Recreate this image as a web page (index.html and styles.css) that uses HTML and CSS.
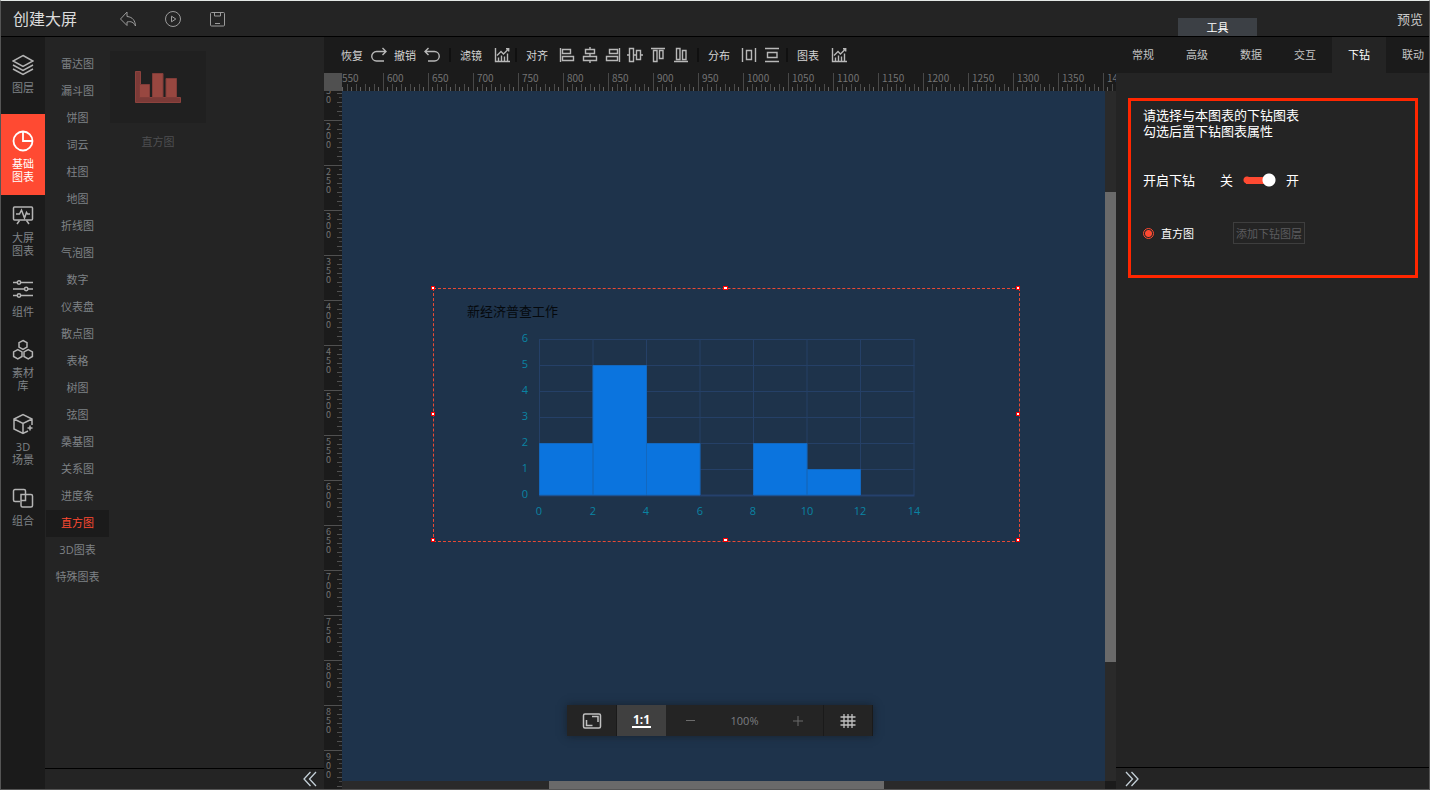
FILE: index.html
```html
<!DOCTYPE html>
<html lang="zh-CN">
<head>
<meta charset="utf-8">
<title>创建大屏</title>
<link rel="stylesheet" href="styles.css">
</head>
<body>
<svg class="defs" aria-hidden="true">
  <symbol id="i-chart" viewBox="0 0 16 16"><path d="M1.500 1v13.500H16M4.500 14v-3.500M7.500 14V8.500M10.500 14V9.500M13.500 14V6.500M3 8.500l4-4 2.500 2.500 5-5M12 1.800h2.700V4.500"/></symbol>
</svg>
<div class="app">
  <header class="top">
    <h1 class="title">创建大屏</h1>
    <div class="actions">
      <button class="act" aria-label="返回"><svg viewBox="0 0 18 18"><path d="M8 2L1.500 9 8 15.500V12c4-1 6.500 0 8.500 4-.3-5-2.500-9-8.500-9.500z"/></svg></button>
      <button class="act" aria-label="播放"><svg viewBox="0 0 18 18"><circle cx="9" cy="9" r="7.500"/><path d="M7.500 6.200v5.600L11.800 9z"/></svg></button>
      <button class="act" aria-label="保存"><svg viewBox="0 0 18 18"><rect x="1.500" y="2.500" width="14" height="13.500" rx="1"/><path d="M5.500 2.500v3.500h6V2.500M6 13.500h5"/></svg></button>
    </div>
    <button class="tool-tab">工具</button>
    <a class="preview" href="#preview">预览</a>
  </header>

  <div class="main">
    <nav class="nav">
      <button class="nav-item"><svg viewBox="0 0 22 22"><path d="M11 1.500L21 7l-10 5.500L1 7zM1 11l10 5.500L21 11M1 15l10 5.500L21 15"/></svg><span>图层</span></button>
      <button class="nav-item active"><svg viewBox="0 0 22 22"><circle cx="11" cy="11" r="9.500"/><path d="M11 1.500V11h9.500"/></svg><span>基础<br>图表</span></button>
      <button class="nav-item"><svg viewBox="0 0 22 22"><rect x="1.500" y="3" width="19" height="13" rx="1"/><path d="M4 10h3.500l2-4 3 8 2-5.500 1 1.500H18M7.500 16.500L5 20M14.500 16.500L17 20"/></svg><span>大屏<br>图表</span></button>
      <button class="nav-item"><svg viewBox="0 0 22 22"><path d="M1 4.500h4.500M8.500 4.500H21M1 11h11.500M16 11h5M1 17.500h4.500M8.500 17.500H21"/><circle cx="7" cy="4.500" r="1.700"/><circle cx="14.200" cy="11" r="1.700"/><circle cx="7" cy="17.500" r="1.700"/></svg><span>组件</span></button>
      <button class="nav-item"><svg viewBox="0 0 22 22"><path d="M11 1.500l4 2.200v4.400l-4 2.200-4-2.200V3.700zM5.800 10.600l4.200 2.300v4.600l-4.200 2.300-4.200-2.300v-4.600zM16.200 10.600l4.200 2.300v4.600l-4.200 2.300-4.200-2.300v-4.600z"/></svg><span>素材<br>库</span></button>
      <button class="nav-item"><svg viewBox="0 0 22 22"><path d="M20 12V6L11 1.500 2 6v10l9 4.500 5-2.500M2 6l9 4.500L20 6M11 10.500v10M18 12.500v5M15.500 15h5"/></svg><span>3D<br>场景</span></button>
      <button class="nav-item"><svg viewBox="0 0 22 22"><path d="M8 14.500H3a1.500 1.500 0 0 1-1.500-1.500V4A1.500 1.500 0 0 1 3 2.500h9A1.500 1.500 0 0 1 13.500 4v3M9 7.500h10a1.500 1.500 0 0 1 1.500 1.500v9.500a1.500 1.500 0 0 1-1.500 1.500h-8.500A1.500 1.500 0 0 1 9 18.500zM13.500 7.500v6H9"/></svg><span>组合</span></button>
    </nav>

    <aside class="left">
      <div class="left-body">
        <ul class="types">
          <li><button>雷达图</button></li><li><button>漏斗图</button></li><li><button>饼图</button></li><li><button>词云</button></li><li><button>柱图</button></li><li><button>地图</button></li><li><button>折线图</button></li><li><button>气泡图</button></li><li><button>数字</button></li><li><button>仪表盘</button></li><li><button>散点图</button></li><li><button>表格</button></li><li><button>树图</button></li><li><button>弦图</button></li><li><button>桑基图</button></li><li><button>关系图</button></li><li><button>进度条</button></li><li><button class="active">直方图</button></li><li><button>3D图表</button></li><li><button>特殊图表</button></li>
        </ul>
        <figure class="thumb">
          <div class="thumb-box"><svg viewBox="0 0 46 32"><path class="frame" d="M.5.500h5v26h40v5H.5z"/><path class="bars" d="M4.500 13.500h10v13h-10zM17.500 2.500h10.500v24H17.500zM31 7.500h10.500v19H31z"/></svg></div>
          <figcaption>直方图</figcaption>
        </figure>
      </div>
      <footer class="foot foot-left"><button aria-label="收起"><svg viewBox="0 0 14 16"><path d="M7.500 1L1 8l6.500 7M13 1L6.500 8l6.500 7"/></svg></button></footer>
    </aside>

    <main class="center">
      <div class="toolbar">
        <button class="cmd">恢复<svg viewBox="0 0 16 16"><path d="M15 4.500H5.500a4.500 4.500 0 0 0 0 9.500H13M11.500 1L15 4.500 11.500 8"/></svg></button>
        <button class="cmd">撤销<svg viewBox="0 0 16 16"><path d="M1 4.500h9.500a4.500 4.500 0 0 1 0 9.500H4M4.500 1L1 4.500 4.500 8"/></svg></button>
        <i class="sep"></i>
        <button class="cmd wide">滤镜<svg><use href="#i-chart"/></svg></button>
        <i class="sep near"></i>
        <span class="name">对齐</span>
        <div class="aligns">
          <button aria-label="左对齐"><svg viewBox="0 0 16 16"><path d="M1.500 1v14M3.500 2.500h8v4h-8zM3.500 9.500h11v4h-11z"/></svg></button>
          <button aria-label="水平居中"><svg viewBox="0 0 16 16"><path d="M8 0v2.500M8 6.500v3M8 13.500V16M3.500 2.500h9v4h-9zM1.500 9.500h13v4h-13z"/></svg></button>
          <button aria-label="右对齐"><svg viewBox="0 0 16 16"><path d="M14.500 1v14M4.500 2.500h8v4h-8zM1.500 9.500h11v4h-11z"/></svg></button>
          <button aria-label="垂直居中"><svg viewBox="0 0 16 16"><path d="M0 8h2.500M6.500 8h3M13.500 8H16M2.500 1.500h4v13h-4zM9.500 3.500h4v9h-4z"/></svg></button>
          <button aria-label="顶对齐"><svg viewBox="0 0 16 16"><path d="M1 1.500h14M3.500 3.500h3.500v11H3.500zM9.500 3.500h3.500v8H9.500z"/></svg></button>
          <button aria-label="底对齐"><svg viewBox="0 0 16 16"><path d="M1 14.500h14M3.500 1.500h3.500v11H3.500zM9.500 3.500h3.500v9H9.500z"/></svg></button>
        </div>
        <i class="sep"></i>
        <span class="name">分布</span>
        <div class="spread">
          <button aria-label="水平分布"><svg viewBox="0 0 16 16"><path d="M1.500 1v14M14.500 1v14M5.500 3.500h5v9h-5z"/></svg></button>
          <button aria-label="垂直分布"><svg viewBox="0 0 16 16"><path d="M1 1.500h14M1 14.500h14M3.500 5.500h9.500v5H3.500z"/></svg></button>
        </div>
        <i class="sep near"></i>
        <button class="cmd wide">图表<svg><use href="#i-chart"/></svg></button>
      </div>
      <div class="stage">
        <div class="corner"></div>
        <div class="ruler-x"><span>550</span><span>600</span><span>650</span><span>700</span><span>750</span><span>800</span><span>850</span><span>900</span><span>950</span><span>1000</span><span>1050</span><span>1100</span><span>1150</span><span>1200</span><span>1250</span><span>1300</span><span>1350</span><span>1400</span></div>
        <div class="ruler-y"><span>150</span><span>200</span><span>250</span><span>300</span><span>350</span><span>400</span><span>450</span><span>500</span><span>550</span><span>600</span><span>650</span><span>700</span><span>750</span><span>800</span><span>850</span><span>900</span></div>
        <div class="canvas">
          <div class="selection">
            <svg class="chart" viewBox="0 0 587 254">
              <text class="chart-title" x="34" y="28">新经济普查工作</text>
              <path class="grid" d="M106 51.500h375.500M106 77.500h375.500M106 103.500h375.500M106 129.500h375.500M106 155.500h375.500M106 181.500h375.500M106.500 51v156M160 51v156M213.500 51v156M267 51v156M320.500 51v156M374 51v156M427.500 51v156M481 51v156"/>
              <path class="axis" d="M106 207.500h375.500"/>
              <g class="bar"><path d="M106.500 155.500h53.500v51.500h-53.500zM160 77.500h53.500V207H160zM213.500 155.500H267V207h-53.500zM320.500 155.500H374V207h-53.500zM374 181.500h53.500V207H374z"/></g>
              <g class="ylab"><text x="95" y="54">6</text><text x="95" y="80">5</text><text x="95" y="106">4</text><text x="95" y="132">3</text><text x="95" y="158">2</text><text x="95" y="184">1</text><text x="95" y="210">0</text></g>
              <g class="xlab"><text x="106" y="227">0</text><text x="160" y="227">2</text><text x="213" y="227">4</text><text x="267" y="227">6</text><text x="320" y="227">8</text><text x="374" y="227">10</text><text x="427" y="227">12</text><text x="481" y="227">14</text></g>
            </svg>
            <i class="h tl"></i><i class="h tm"></i><i class="h tr"></i><i class="h ml"></i><i class="h mr"></i><i class="h bl"></i><i class="h bm"></i><i class="h br"></i>
          </div>
        </div>
        <div class="scroll-y"><i></i></div>
        <div class="scroll-x"><i></i></div>
        <div class="scroll-corner"></div>
      </div>
      <div class="zoombar">
        <button aria-label="适应"><svg viewBox="0 0 20 18"><rect x="1.500" y="2" width="17" height="14" rx="1.500"/><path d="M10 4.500h6v5.500M4.500 8v5.500h6"/></svg></button>
        <button class="active"><span class="ratio">1:1</span></button>
        <div class="zoom">
          <button aria-label="缩小"><svg viewBox="0 0 10 10"><path d="M0 4.500h9"/></svg></button>
          <output>100%</output>
          <button aria-label="放大"><svg viewBox="0 0 10 10"><path d="M0 5h10M5 0v10"/></svg></button>
        </div>
        <button class="gridbtn" aria-label="网格"><svg viewBox="0 0 16 16"><path d="M4 1v14M8 1v14M12 1v14M.5 4h15M.5 8h15M.5 12h15"/></svg></button>
      </div>
    </main>

    <aside class="right">
      <div class="tabs"><button>常规</button><button>高级</button><button>数据</button><button>交互</button><button class="active">下钻</button><button>联动</button></div>
      <div class="right-body">
        <section class="drill">
          <p>请选择与本图表的下钻图表<br>勾选后置下钻图表属性</p>
          <label class="enable"><span class="enable-name">开启下钻</span><span>关</span><input type="checkbox" class="switch" checked><span>开</span></label>
          <div class="target">
            <label><input type="radio" name="layer" checked>直方图</label>
            <button>添加下钻图层</button>
          </div>
        </section>
      </div>
      <footer class="foot"><button aria-label="展开"><svg viewBox="0 0 14 16"><path d="M1 1l6.500 7L1 15M6.500 1L13 8l-6.500 7"/></svg></button></footer>
    </aside>
  </div>
</div>
</body>
</html>
```
FILE: styles.css
```css
* { box-sizing: border-box; }
body {
  margin: 0;
  font: 11px/13px "Open Sans", "Noto Sans CJK SC", sans-serif;
  color: #7f8286;
  background: #242424;
}
button {
  font: inherit;
  color: inherit;
  background: none;
  border: 0;
  padding: 0;
  margin: 0;
}
svg { fill: none; stroke: currentColor; display: block; flex: none; }
.defs { position: absolute; width: 0; height: 0; }
h1, p, ul, figure { margin: 0; padding: 0; }
ul { list-style: none; }

.app {
  height: 100vh;
  display: flex;
  flex-direction: column;
  border: 1px solid #555;
  border-top-color: #e4e8e6;
  overflow: hidden;
}

/* header */
.top {
  flex: none;
  height: 36px;
  display: flex;
  align-items: center;
  border-bottom: 1px solid #000;
  padding: 0 6px 0 12px;
  color: #c8c8c8;
}
.title { font-size: 16px; line-height: 24px; font-weight: 400; color: #dcdcdc; }
.actions { display: flex; gap: 27px; margin-left: 42px; color: #9b9b9b; }
.act svg { width: 18px; height: 18px; }
.tool-tab {
  align-self: flex-end;
  width: 79px;
  height: 18px;
  margin-left: auto;
  background: #3c4045;
  color: #fff;
}
.preview {
  width: 26px;
  margin-left: 140px;
  font-size: 13px;
  line-height: 20px;
  color: #c8c8c8;
  text-decoration: none;
  white-space: nowrap;
}

.main { flex: 1; min-height: 0; display: flex; }

/* icon navigation */
.nav { flex: none; width: 44px; padding-top: 7px; background: #1b1b1b; }
.nav-item {
  width: 100%;
  display: flex;
  flex-direction: column;
  align-items: center;
  gap: 5px;
  padding: 10px 0 11px;
}
.nav-item svg { width: 22px; height: 22px; color: #b4b4b4; stroke-width: 1.500; }
.nav-item.active {
  margin: 9px 0 -1px;
  padding: 16px 0 12px;
  background: #ff4a32;
  color: #fff;
}
.nav-item.active svg { color: #fff; stroke-width: 1.800; }

/* chart type panel */
.left { flex: none; width: 279px; display: flex; flex-direction: column; background: #242424; }
.left-body { flex: 1; min-height: 0; display: flex; gap: 1px; padding: 14px 0 0 1px; }
.types { width: 63px; }
.types button { width: 100%; height: 27px; padding-bottom: 2px; display: block; }
.types .active { background: #1b1b1b; color: #ff4a32; }
.thumb { width: 96px; text-align: center; color: #4e4f51; }
.thumb-box {
  height: 72px;
  margin-bottom: 12px;
  display: grid;
  place-items: center;
  background: #202020;
}
.thumb svg { width: 46px; height: 32px; }
.frame { fill: #7b3a37; stroke: #8c423d; }
.bars { fill: #984740; stroke: #803c38; }
.foot {
  flex: none;
  height: 22px;
  padding: 0 9px;
  display: flex;
  align-items: center;
  border-top: 1px solid #000;
  color: #c4d0d8;
}
.foot-left { height: 21px; padding: 0 7px; justify-content: flex-end; }
.foot svg { width: 14px; height: 16px; stroke-width: 1.300; }

/* centre */
.center { flex: 1; min-width: 0; display: flex; flex-direction: column; position: relative; background: #1b1b1b; }
.toolbar {
  flex: none;
  height: 36px;
  display: flex;
  align-items: center;
  padding-left: 17px;
  color: #d4d4d4;
  white-space: nowrap;
}
.toolbar svg { width: 16px; height: 16px; color: #b8b8b8; stroke-width: 1.400; }
.cmd { display: flex; align-items: center; gap: 8px; margin-right: 7px; }
.cmd.wide { gap: 12px; margin-right: 4px; }
.sep { flex: none; width: 2px; height: 14px; margin: 0 9px 0 2px; background: #101010; }
.sep.near { margin-left: 1px; }
.aligns { width: 130px; margin: 0 6px 0 11px; display: flex; justify-content: space-between; }
.spread { width: 39px; margin: 0 5px 0 11px; display: flex; justify-content: space-between; }

.stage {
  flex: 1;
  min-height: 0;
  display: grid;
  grid-template: 18px minmax(0, 1fr) 8px / 18px minmax(0, 1fr) 11px;
}
.corner { background: #505050; }
.ruler-x, .ruler-y { display: flex; font-family: "Noto Sans CJK SC", sans-serif; font-size: 10px; color: #737373; }
.ruler-x { grid-column: 2 / 4; overflow-x: clip; }
.ruler-x span {
  flex: none;
  width: 45px;
  padding-left: 3px;
  line-height: 10px;
  border-left: 1px solid #484848;
  background:
    repeating-linear-gradient(90deg, transparent 0 8px, #4a4a4a 8px 9px) 0 11px / 44px 7px no-repeat,
    repeating-linear-gradient(90deg, transparent 0 3px, #606060 3px 4px, transparent 4px 9px) 0 14px / 44px 4px no-repeat;
}
.ruler-x span:first-child { margin-left: -4px; }
.ruler-y { grid-row: 2 / 4; flex-direction: column; overflow-y: clip; }
.ruler-y span {
  flex: none;
  height: 45px;
  padding: 1px 11px 0 2px;
  line-height: 9px;
  word-break: break-all;
  font-size: 9px;
  border-top: 1px solid #505050;
  background:
    repeating-linear-gradient(transparent 0 8px, #505050 8px 9px) 13px 0 / 5px 44px no-repeat,
    repeating-linear-gradient(transparent 0 3px, #444 3px 4px, transparent 4px 9px) 15px 0 / 3px 44px no-repeat;
}
.ruler-y span:first-child { margin-top: -16px; }
.canvas { position: relative; overflow: hidden; background: #1e334b; grid-area: 2 / 2; }
.scroll-y, .scroll-x { display: grid; background: #2a2a2a; }
.scroll-y { grid-area: 2 / 3; grid-template-rows: 101fr 470fr 119fr; }
.scroll-y i { grid-row: 2; background: #6a6a6a; }
.scroll-x { grid-area: 3 / 2; grid-template-columns: 207fr 335fr 221fr; }
.scroll-x i { grid-column: 2; background: #6a6a6a; }
.scroll-corner { grid-area: 3 / 3; }

/* selected widget on the free canvas */
.selection {
  position: absolute;
  left: 91px;
  top: 197px;
  width: 587px;
  height: 254px;
  border: 1px dashed #e84a34;
}
.chart { position: absolute; left: -1px; top: -1px; width: 587px; height: 254px; }
.chart text { stroke: none; }
.chart-title { font-size: 13px; fill: #05090d; }
.grid { stroke: #254067; }
.axis { stroke: #25416d; stroke-width: 2; }
.bar { fill: #0b74de; stroke: #1268c0; }
.ylab, .xlab { font-size: 11px; fill: #0a83a3; }
.ylab { text-anchor: end; }
.xlab { text-anchor: middle; }
.h { position: absolute; width: 4px; height: 4px; border: 1px solid #f00; background: #fff; }
.tl, .tm, .tr { top: -3px; }
.ml, .mr { top: 123px; }
.bl, .bm, .br { bottom: -1px; }
.tl, .ml, .bl { left: -3px; }
.tm, .bm { left: 289px; width: 5px; }
.tr, .mr, .br { right: -1px; }

.zoombar {
  position: absolute;
  bottom: 53px;
  left: 50%;
  transform: translateX(-50%);
  width: 306px;
  height: 31px;
  display: flex;
  background: #242424;
  box-shadow: 0 0 8px rgba(20, 26, 34, .7);
}
.zoombar > button { width: 50px; display: grid; place-items: center; color: #c0c0c0; border-right: 1px solid #1a1a1a; }
.zoombar > .active { width: 49px; background: #404040; color: #fff; border: 0; }
.zoombar > button svg { width: 20px; height: 18px; stroke-width: 1.500; }
.zoombar > .gridbtn { border-left: 1px solid #1a1a1a; }
.zoombar > .gridbtn svg { width: 16px; height: 16px; stroke-width: 1.300; }
.ratio { padding: 0 1px; font-size: 12px; line-height: 13px; font-weight: 700; border-bottom: 2px solid #fff; }
.zoom { flex: 1; display: flex; align-items: center; justify-content: space-between; padding: 0 20px; color: #6b6b6b; }
.zoom svg { width: 10px; height: 10px; }
.zoom output { color: #7c7e82; }

/* properties */
.right { flex: none; width: 313px; display: flex; flex-direction: column; background: #242424; }
.tabs { flex: none; height: 36px; display: flex; overflow: hidden; background: #1b1b1b; color: #c4c4c4; }
.tabs button { flex: none; width: 54px; padding-bottom: 1px; }
.tabs .active { background: #242424; color: #fff; }
.right-body { flex: 1; min-height: 0; padding: 25px 11px 0 12px; }
.drill { height: 180px; padding: 6px 12px; border: 3px solid #ff2600; color: #fff; }
.drill p { font-size: 13px; line-height: 16px; }
.enable { display: flex; align-items: center; gap: 10px; margin-top: 31px; font-size: 13px; line-height: 20px; }
.enable-name { width: 67px; }
.switch {
  appearance: none;
  flex: none;
  width: 33px;
  height: 14px;
  margin: 0;
  background:
    radial-gradient(circle at 26px 7px, #fff 6px, transparent 7px),
    linear-gradient(#ff4a32, #ff4a32) 3px 4px / 22px 7px no-repeat,
    radial-gradient(circle at 4px 7px, #ff4a32 3px, transparent 4px);
}
.target { display: flex; align-items: center; margin-top: 32px; }
.target label { display: flex; align-items: center; gap: 7px; width: 90px; }
.target input {
  appearance: none;
  width: 11px;
  height: 11px;
  margin: 0;
  border: 1px solid #ff4a32;
  border-radius: 50%;
  background: radial-gradient(circle, #ff4a32 3px, transparent 4px);
}
.target button { width: 72px; height: 22px; border: 1px solid #3e3e3e; color: #5c5c5f; white-space: nowrap; }
```
